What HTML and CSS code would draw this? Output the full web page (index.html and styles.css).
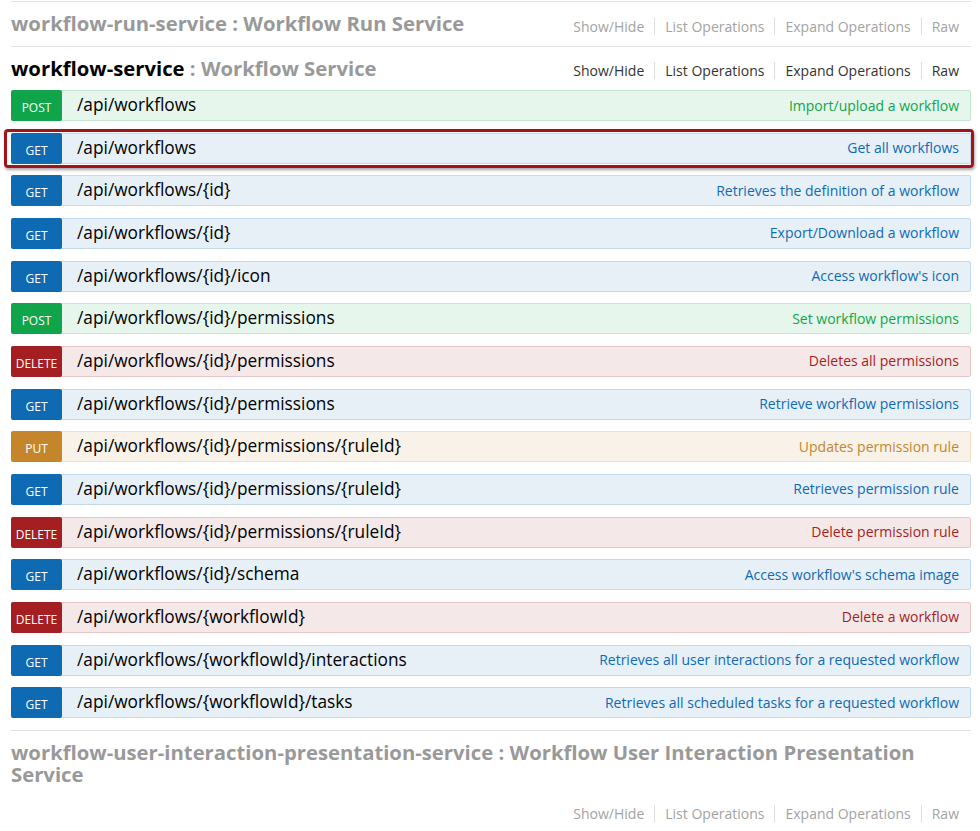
FILE: index.html
```html
<!DOCTYPE html>
<html>
<head>
<meta charset="utf-8">
<link rel="stylesheet" href="styles.css">
</head>
<body>
<section class="resource">
  <div class="heading">
    <h2 class="title"><span class="name">workflow-run-service</span> : Workflow Run Service</h2>
    <ul class="options">
      <li>Show/Hide</li><li>List Operations</li><li>Expand Operations</li><li>Raw</li>
    </ul>
  </div>
</section>
<section class="resource active">
  <div class="heading">
    <h2 class="title"><span class="name">workflow-service</span> : Workflow Service</h2>
    <ul class="options">
      <li>Show/Hide</li><li>List Operations</li><li>Expand Operations</li><li>Raw</li>
    </ul>
  </div>
  <div class="endpoints">
    <div class="op post"><span class="method">POST</span><span class="path">/api/workflows</span><span class="desc">Import/upload a workflow</span></div>
    <div class="op get highlighted"><span class="method">GET</span><span class="path">/api/workflows</span><span class="desc">Get all workflows</span><span class="callout"></span></div>
    <div class="op get"><span class="method">GET</span><span class="path">/api/workflows/{id}</span><span class="desc">Retrieves the definition of a workflow</span></div>
    <div class="op get"><span class="method">GET</span><span class="path">/api/workflows/{id}</span><span class="desc">Export/Download a workflow</span></div>
    <div class="op get"><span class="method">GET</span><span class="path">/api/workflows/{id}/icon</span><span class="desc">Access workflow's icon</span></div>
    <div class="op post"><span class="method">POST</span><span class="path">/api/workflows/{id}/permissions</span><span class="desc">Set workflow permissions</span></div>
    <div class="op delete"><span class="method">DELETE</span><span class="path">/api/workflows/{id}/permissions</span><span class="desc">Deletes all permissions</span></div>
    <div class="op get"><span class="method">GET</span><span class="path">/api/workflows/{id}/permissions</span><span class="desc">Retrieve workflow permissions</span></div>
    <div class="op put"><span class="method">PUT</span><span class="path">/api/workflows/{id}/permissions/{ruleId}</span><span class="desc">Updates permission rule</span></div>
    <div class="op get"><span class="method">GET</span><span class="path">/api/workflows/{id}/permissions/{ruleId}</span><span class="desc">Retrieves permission rule</span></div>
    <div class="op delete"><span class="method">DELETE</span><span class="path">/api/workflows/{id}/permissions/{ruleId}</span><span class="desc">Delete permission rule</span></div>
    <div class="op get"><span class="method">GET</span><span class="path">/api/workflows/{id}/schema</span><span class="desc">Access workflow's schema image</span></div>
    <div class="op delete"><span class="method">DELETE</span><span class="path">/api/workflows/{workflowId}</span><span class="desc">Delete a workflow</span></div>
    <div class="op get"><span class="method">GET</span><span class="path">/api/workflows/{workflowId}/interactions</span><span class="desc">Retrieves all user interactions for a requested workflow</span></div>
    <div class="op get"><span class="method">GET</span><span class="path">/api/workflows/{workflowId}/tasks</span><span class="desc">Retrieves all scheduled tasks for a requested workflow</span></div>
  </div>
</section>
<section class="resource">
  <div class="heading">
    <h2 class="title"><span class="name">workflow-user-interaction-presentation-service</span> : Workflow User Interaction Presentation Service</h2>
    <ul class="options">
      <li>Show/Hide</li><li>List Operations</li><li>Expand Operations</li><li>Raw</li>
    </ul>
  </div>
</section>
</body>
</html>
```
FILE: styles.css
```css
* { box-sizing: border-box; }
html, body { margin: 0; background: #fff; }
body {
  padding: 1px 9px 0 11px;
  font-family: "Open Sans", "DejaVu Sans", sans-serif;
  color: #000;
  overflow: hidden;
  height: 831px;
}
ul { list-style: none; margin: 0; padding: 0; }

.heading {
  display: flex;
  flex-wrap: wrap;
  align-items: flex-start;
  row-gap: 15px;
  border-top: 1px solid #e2e2e2;
  padding: 10px 0 11px 0;
}
.title {
  margin: 0;
  font-size: 20.3px;
  line-height: 22px;
  font-weight: 700;
  color: #999;
}
.active .title .name { color: #000; }
.options {
  display: flex;
  margin-left: auto;
  margin-top: 5.5px;
  font-size: 14px;
  line-height: 17px;
  color: #a3a3a3;
  padding-right: 12px;
}
.active .options { color: #333; }
.options li {
  padding: 0 10px;
  border-right: 1px solid #dddddd;
}
.options li:last-child { border-right: none; padding-right: 0; }

.endpoints {
  display: flex;
  flex-direction: column;
  gap: 11.67px;
  margin-bottom: 11.6px;
}
.op {
  position: relative;
  display: grid;
  grid-template-columns: 50px 1fr auto;
  column-gap: 15px;
  align-items: center;
  height: 31px;
  border: 1px solid;
  border-radius: 2px;
}
.method {
  align-self: stretch;
  margin: -1px 0 -1px -1px;
  border-radius: 2px;
  color: #fff;
  font-size: 12px;
  display: flex;
  align-items: center;
  justify-content: center;
  padding-top: 4px;
}
.path {
  justify-self: start;
  text-align: left;
  font-size: 17.3px;
  padding-bottom: 2px;
  white-space: nowrap;
}
.desc {
  justify-self: end;
  padding-right: 11px;
  font-size: 14px;
  padding-bottom: 1px;
  white-space: nowrap;
}

.get { background: #e7f0f7; border-color: #c3d9ec; }
.get .method { background: #0f6ab4; }
.get .desc { color: #0f6ab4; }

.post { background: #e7f6ec; border-color: #c3e8d1; }
.post .method { background: #10a54a; }
.post .desc { color: #10a54a; }

.delete { background: #f5e8e8; border-color: #e8c6c7; }
.delete .method { background: #a41e22; }
.delete .desc { color: #a41e22; }

.put { background: #f9f2e9; border-color: #f0e0ca; }
.put .method { background: #c5862b; }
.put .desc { color: #c5862b; }

.callout {
  position: absolute;
  top: -5px;
  bottom: -5px;
  left: -8px;
  right: -4px;
  border: 3px solid #a3141a;
  border-radius: 4px;
  box-shadow: 1px 2px 3px rgba(0, 0, 0, 0.35);
  pointer-events: none;
}
```
